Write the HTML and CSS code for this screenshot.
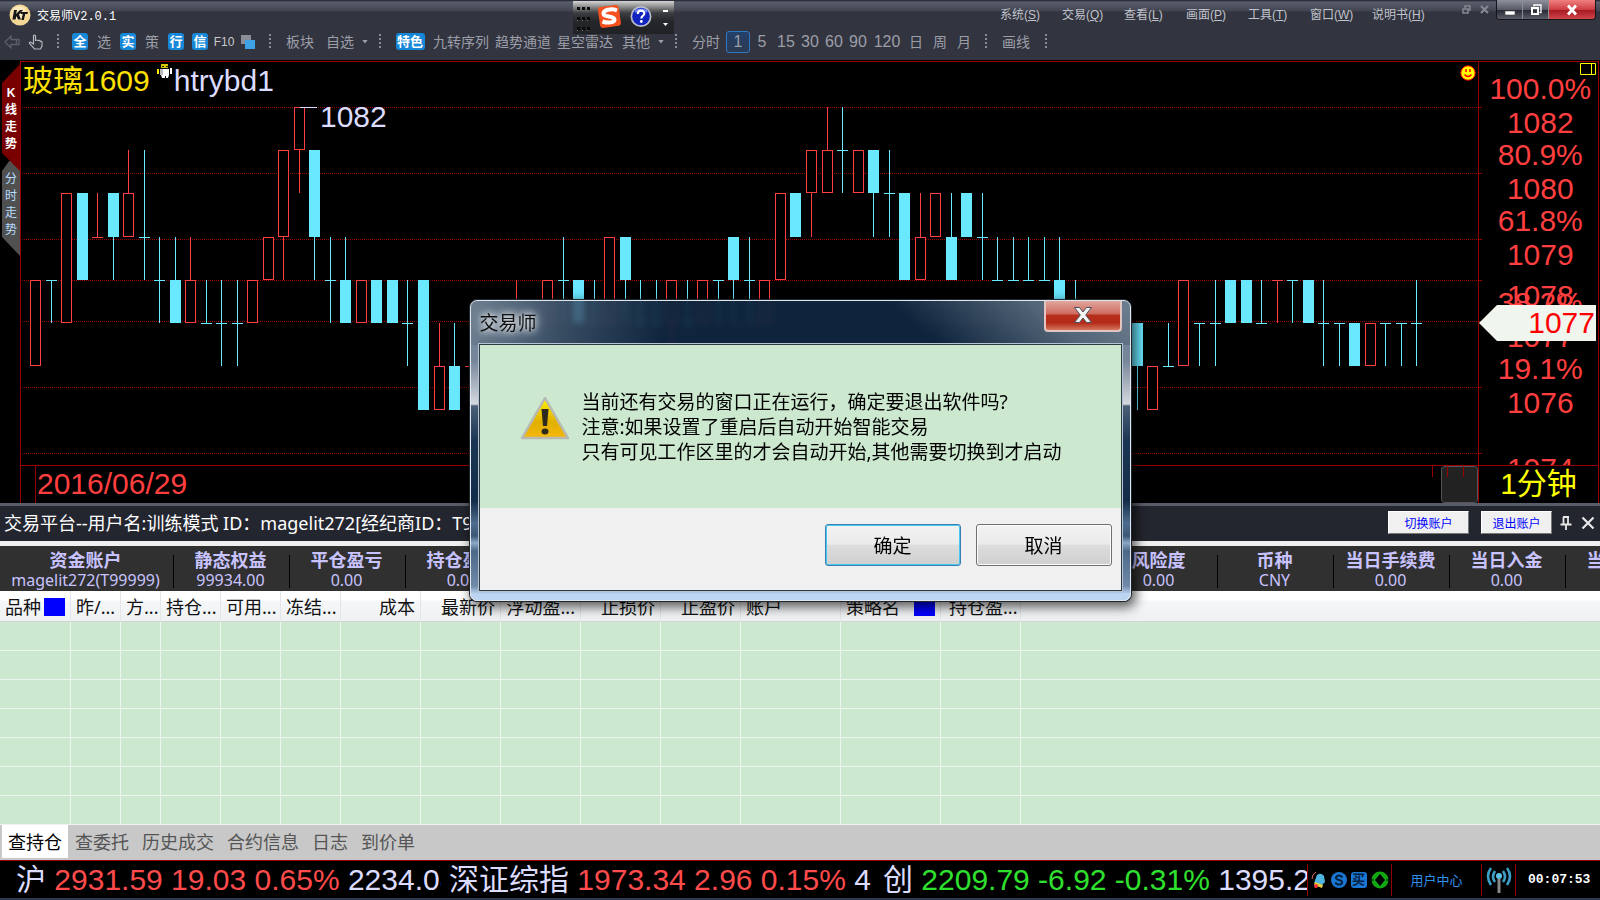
FILE: index.html
```html
<!DOCTYPE html>
<html lang="zh-CN">
<head>
  <meta charset="UTF-8">
  <meta name="viewport" content="width=device-width, initial-scale=1.0">
  <title>交易师V2.0.1</title>
  <link rel="stylesheet" href="styles.css">
</head>
<body>
  <!-- 标题栏 -->
  <header class="titlebar">
    <svg class="logo" width="22" height="22" viewBox="0 0 22 22">
      <circle cx="11" cy="11" r="10.5" fill="#f3d795"/>
      <circle cx="10" cy="9" r="7" fill="#fbe9bd"/>
      <path d="M5 6h3L7 10l4-4h3l-4 4.500 2 5H9l-1.500-3.500-1 3.500h-3zM12 8h7l-.5 2h-2.200l-1.500 6h-2.500l1.500-6h-2.300z" fill="#151515"/>
    </svg>
    <h1>交易师V2.0.1</h1>
    <nav class="menu">
      <a href="#">系统(<u>S</u>)</a>
      <a href="#">交易(<u>Q</u>)</a>
      <a href="#">查看(<u>L</u>)</a>
      <a href="#">画面(<u>P</u>)</a>
      <a href="#">工具(<u>T</u>)</a>
      <a href="#">窗口(<u>W</u>)</a>
      <a href="#">说明书(<u>H</u>)</a>
    </nav>
    <div class="mdi">
      <button aria-label="还原子窗口"><svg width="9" height="9" viewBox="0 0 9 9"><path d="M3 3V1h5v4H6M1 4h5v4H1z" fill="none" stroke="#858893" stroke-width="1.500"/></svg></button>
      <button aria-label="关闭子窗口"><svg width="9" height="9" viewBox="0 0 9 9"><path d="M1 1l7 7M8 1L1 8" stroke="#858893" stroke-width="2.200"/></svg></button>
    </div>
    <div class="win-buttons">
      <button aria-label="最小化"><svg width="12" height="12" viewBox="0 0 12 12"><rect x="1" y="7" width="10" height="4" fill="#fff" stroke="#444" stroke-width=".6"/></svg></button>
      <button aria-label="还原"><svg width="12" height="12" viewBox="0 0 12 12"><path d="M4 2.500V1h7v7.500H9.500" fill="none" stroke="#fff" stroke-width="1.300"/><path d="M2 4h6v6H2z" fill="none" stroke="#fff" stroke-width="2"/></svg></button>
      <button class="win-close" aria-label="关闭"><svg width="12" height="12" viewBox="0 0 12 12"><path d="M2 1.500l8 9M10 1.500l-8 9" stroke="#fff" stroke-width="2.800"/></svg></button>
    </div>
  </header>

  <!-- 输入法悬浮条 -->
  <div class="ime">
    <svg width="101" height="33" viewBox="0 0 101 33">
      <g stroke="#0a0a0a" stroke-width="3" stroke-dasharray="3 2"><path d="M4 7.500h15M4 17.500h15M4 27.500h15"/></g>
      <g stroke="#777" stroke-width="1" stroke-dasharray="1 4"><path d="M4 9.500h15M4 19.500h15M4 29.500h15"/></g>
      <rect x="26" y="5" width="21" height="21" rx="3" fill="#f4511e" transform="rotate(-8 36 16)"/>
      <path d="M44 9.500C38 7 30 9 30.500 13c.5 3.500 10.500 1.500 11 5.500.3 3-6.500 4-12 2" fill="none" stroke="#fff" stroke-width="4"/>
      <circle cx="68" cy="15.500" r="10.500" fill="#b9bccb"/>
      <circle cx="68" cy="15.500" r="8.800" fill="#1224c0"/>
      <path d="M62 11a7 5 0 0 1 12 0" fill="none" stroke="#6f86ff" stroke-width="2"/>
      <path d="M64.800 13c0-4.500 6.500-4.200 6.500-.5 0 2.300-3 2.300-3 5" fill="none" stroke="#fff" stroke-width="2.200"/>
      <circle cx="68.300" cy="20.500" r="1.400" fill="#fff"/>
      <path d="M90 9h5v2h-5zM90 22h5l-2.500 3z" fill="#fff"/>
    </svg>
  </div>

  <!-- 工具栏 -->
  <div class="toolbar">
    <button class="nav-btn" aria-label="后退"><svg width="16" height="16" viewBox="0 0 16 16"><path d="M1 8l6-6v3.500h8v5H7V14zM12.500 5.500v5" fill="none" stroke="#5c5f69" stroke-width="1.300"/></svg></button>
    <button class="nav-btn" aria-label="手形"><svg width="16" height="16" viewBox="0 0 16 16"><path d="M5.500 10V2q0-1 1-1t1 1v5q0-1 1.200-1t1.300 1q0-.8 1.200-.6t1.300 1q1.500-.4 1.500 1V12l-1.500 3H6.500L1.500 9.500q-.5-1.500 1-1.500z" fill="none" stroke="#b4b6bd" stroke-width="1.200"/></svg></button>
    <span class="sep"></span>
    <button class="cell"><b class="badge">全</b></button>
    <button class="cell">选</button>
    <button class="cell"><b class="badge">实</b></button>
    <button class="cell">策</button>
    <button class="cell"><b class="badge">行</b></button>
    <button class="cell"><b class="badge">信</b></button>
    <button class="cell f10">F10</button>
    <button class="cell" aria-label="窗口布局"><svg width="14" height="14" viewBox="0 0 14 14"><path d="M0 0h10v9H0z" fill="#8b8e96"/><path d="M4 5h10v9H4z" fill="#3ea2e5"/></svg></button>
    <span class="sep"></span>
    <button class="pair">板块</button>
    <button class="pair">自选</button>
    <span class="caret"></span>
    <span class="sep"></span>
    <button class="pair"><b class="badge wide">特色</b></button>
    <button class="quad">九转序列</button>
    <button class="quad">趋势通道</button>
    <button class="quad">星空雷达</button>
    <button class="pair">其他</button>
    <span class="caret"></span>
    <span class="sep"></span>
    <button class="pair">分时</button>
    <button class="cell num active">1</button>
    <button class="cell num">5</button>
    <button class="cell num">15</button>
    <button class="cell num">30</button>
    <button class="cell num">60</button>
    <button class="cell num">90</button>
    <button class="cell num long">120</button>
    <button class="cell">日</button>
    <button class="cell">周</button>
    <button class="cell">月</button>
    <span class="sep"></span>
    <button class="pair">画线</button>
    <span class="sep"></span>
  </div>

  <!-- K线图 -->
  <section class="chart">
    <div class="side-tabs">
      <button class="side-tab on">K线走势</button>
      <button class="side-tab">分时走势</button>
    </div>
    <div class="plot">
      <svg id="candles" width="100%" height="403"></svg>
      <div class="symbol">
        <span class="code">玻璃1609</span>
        <svg width="16" height="16" viewBox="0 0 16 16">
          <path d="M4 1h7v4H4z" fill="#d8c800"/><path d="M5 3h2v1H5zM9 3h2v1H9z" fill="#222"/>
          <path d="M4 6h8v6l-1 3H9v-2H8v2H5l-1-3z" fill="#fff"/><path d="M3 6h3v6H3z" fill="#bbb"/>
          <path d="M0 6h2v5H0z" fill="#ffe900"/><path d="M13 5h2v6h-2z" fill="#fff"/>
        </svg>
        <span class="strategy">htrybd1</span>
      </div>
      <svg class="smiley" width="16" height="16" viewBox="0 0 16 16">
        <circle cx="8" cy="8" r="7.200" fill="#ff0" stroke="#f00"/>
        <path d="M6 4v3M10 4v3M4.500 9.500q3.500 4 7 0" fill="none" stroke="#f00" stroke-width="1.500"/>
      </svg>
      <div class="time-axis">
        <span class="date">2016/06/29</span>
        <svg width="46" height="37" viewBox="0 0 46 37">
          <rect x="9.500" y=".5" width="36" height="36" rx="3" fill="#222" stroke="#555"/>
          <path d="M.5 0v11M15.500 0v11M31.500 0v11" stroke="#960000"/>
        </svg>
      </div>
    </div>
    <div class="price-axis">
      <svg id="prices" width="100%" height="404"></svg>
      <div class="period">1分钟</div>
    </div>
  </section>

  <!-- 账户面板 -->
  <section class="account">
    <div class="account-title">
      <h2>交易平台--用户名:训练模式 ID：magelit272[经纪商ID：T99999]</h2>
      <button class="acc-btn switch">切换账户</button>
      <button class="acc-btn">退出账户</button>
      <button class="acc-icon" aria-label="固定"><svg width="12" height="14" viewBox="0 0 12 14"><path d="M3 1h6M3.500 1v7M8 1v7M.5 8.500h11M6 9v5" stroke="#e8e8e8" stroke-width="1.800" fill="none"/></svg></button>
      <button class="acc-icon" aria-label="关闭面板"><svg width="14" height="14" viewBox="0 0 14 14"><path d="M1.500 1.500l11 11M12.500 1.500l-11 11" stroke="#e8e8e8" stroke-width="2.200"/></svg></button>
    </div>
    <dl class="stats">
      <div class="stat first"><dt>资金账户</dt><dd>magelit272(T99999)</dd></div>
      <div class="stat"><dt>静态权益</dt><dd>99934.00</dd></div>
      <div class="stat"><dt>平仓盈亏</dt><dd>0.00</dd></div>
      <div class="stat"><dt>持仓盈亏</dt><dd>0.00</dd></div>
      <div class="stat"></div>
      <div class="stat"></div>
      <div class="stat"></div>
      <div class="stat"></div>
      <div class="stat"></div>
      <div class="stat"><dt>风险度</dt><dd>0.00</dd></div>
      <div class="stat"><dt>币种</dt><dd>CNY</dd></div>
      <div class="stat"><dt>当日手续费</dt><dd>0.00</dd></div>
      <div class="stat"><dt>当日入金</dt><dd>0.00</dd></div>
      <div class="stat"><dt>当日出金</dt></div>
    </dl>
    <div class="grid">
      <table>
        <colgroup>
          <col class="w71"><col class="w50"><col class="w40"><col class="w60"><col class="w60"><col class="w60">
          <col class="w80"><col class="w80"><col class="w80"><col class="w80"><col class="w80">
          <col class="w100"><col class="w100"><col class="w80"><col>
        </colgroup>
        <thead>
          <tr>
            <th><div class="marked">品种<i></i></div></th>
            <th>昨/...</th>
            <th>方...</th>
            <th>持仓...</th>
            <th>可用...</th>
            <th>冻结...</th>
            <th class="right">成本</th>
            <th class="right">最新价</th>
            <th class="right">浮动盈...</th>
            <th class="right">止损价</th>
            <th class="right">止盈价</th>
            <th>账户</th>
            <th><div class="marked">策略名<i></i></div></th>
            <th class="wide-pad">持仓盈...</th>
            <th></th>
          </tr>
        </thead>
        <tbody id="rows"></tbody>
      </table>
    </div>
    <div class="tabs">
      <button class="tab on">查持仓</button>
      <button class="tab">查委托</button>
      <button class="tab">历史成交</button>
      <button class="tab">合约信息</button>
      <button class="tab">日志</button>
      <button class="tab">到价单</button>
    </div>
  </section>

  <!-- 底部行情 -->
  <footer class="ticker">
    <div class="quotes">
      <div class="quote first">沪 <span class="up">2931.59 19.03 0.65%</span> 2234.08</div>
      <div class="quote">深证综指 <span class="up">1973.34 2.96 0.15%</span> 4</div>
      <div class="quote">创 <span class="down">2209.79 -6.92 -0.31%</span> 1395.27</div>
    </div>
    <div class="tray">
      <svg width="16" height="18" viewBox="0 0 16 18"><path d="M3 12L6 4q4-3 7 1l1 6-3 3z" fill="#4fb4e0"/><path d="M4 11l8 3-1 3-8-3z" fill="#e8d040"/><circle cx="5" cy="15" r="2" fill="#f33"/><path d="M1 8q0-5 4-7" fill="none" stroke="#d66"/></svg>
      <svg width="16" height="18" viewBox="0 0 16 18"><circle cx="8" cy="9" r="8" fill="#1976d2"/><path d="M11.500 6.500Q10 4.500 8 4.500T4.800 6.500Q5 8.500 8 9t3.200 2.500Q11 13.500 8 13.500t-3.500-2" fill="none" stroke="#06213f" stroke-width="2"/></svg>
      <span class="buy">买</span>
      <svg width="18" height="18" viewBox="0 0 18 18"><circle cx="9" cy="9" r="8.500" fill="#12a812"/><path d="M9 3l5 6-5 6-5-6z" fill="#000"/><path d="M0 9h3M15 9h3" stroke="#000"/></svg>
    </div>
    <a class="user-center" href="#">用户中心</a>
    <div class="signal">
      <svg width="26" height="28" viewBox="0 0 26 28"><g fill="none" stroke="#3f9cc4" stroke-width="2.600"><path d="M5 2q-6 8 0 17M21 2q6 8 0 17M9 5q-4 6 0 11M17 5q4 6 0 11"/></g><circle cx="13" cy="10" r="3" fill="#5cc0e8"/><path d="M11.500 13h3v14h-3z" fill="#888"/></svg>
    </div>
    <time class="clock">00:07:53</time>
  </footer>

  <!-- 退出确认 -->
  <div class="overlay">
    <div class="dialog" role="alertdialog" aria-labelledby="dlg-title" aria-describedby="dlg-text">
      <div class="dialog-head">
        <h3 id="dlg-title">交易师</h3>
        <button class="dialog-close" aria-label="关闭"><svg width="20" height="18" viewBox="0 0 20 18"><path d="M1.500 1.500h5L10 6l3.500-4.500h5L12.700 9l5.800 7.500h-5L10 12l-3.500 4.500h-5L7.300 9z" fill="#f4f4f4" stroke="#4a5060"/></svg></button>
      </div>
      <div class="dialog-body">
        <div class="dialog-main">
          <svg width="50" height="44" viewBox="0 0 50 44">
            <defs><linearGradient id="warn" x1="0" y1="0" x2="0" y2="1"><stop offset="0" stop-color="#fff200"/><stop offset=".6" stop-color="#e0b000"/><stop offset="1" stop-color="#f5b80c"/></linearGradient></defs>
            <path d="M25 2L48 42H2z" fill="url(#warn)" stroke="#b9b9b4" stroke-width="2.500" stroke-linejoin="round"/>
            <path d="M21.500 13h7l-1.500 17h-4z" fill="#2e2a1e"/><ellipse cx="25" cy="35.500" rx="3.500" ry="3" fill="#2e2a1e"/>
          </svg>
          <p id="dlg-text">当前还有交易的窗口正在运行，确定要退出软件吗?<br>注意:如果设置了重启后自动开始智能交易<br>只有可见工作区里的才会自动开始,其他需要切换到才启动</p>
        </div>
        <div class="dialog-foot">
          <button class="dlg-btn default">确定</button>
          <button class="dlg-btn">取消</button>
        </div>
      </div>
    </div>
  </div>

  <script src="script.js"></script>
</body>
</html>
```
FILE: styles.css
```css
* {
  box-sizing: border-box;
}

html,
body {
  height: 100%;
}

body {
  margin: 0;
  display: flex;
  flex-direction: column;
  background: #000;
  font-family: "Noto Sans", "Noto Sans CJK SC", sans-serif;
  overflow: hidden;
}

button {
  border: none;
  padding: 0;
  background: none;
  font: inherit;
  color: inherit;
  display: flex;
  align-items: center;
  justify-content: center;
  white-space: nowrap;
}

h1, h2, h3, p, dl, dt, dd {
  margin: 0;
  font-weight: normal;
}

/* 标题栏 */
.titlebar {
  display: flex;
  flex: none;
  height: 30px;
  padding-left: 9px;
  align-items: center;
  background: linear-gradient(#1c2028 0, #5a5e6c 2px, #444753 10px, #3f424d 11px, #32343f 12px);
  font-family: "Liberation Sans", "Noto Sans CJK SC", sans-serif;
  font-size: 12px;
  color: #fff;
}

.titlebar h1 {
  flex: 1;
  padding-left: 6px;
  font-family: "Liberation Mono", "Noto Sans CJK SC", monospace;
  font-size: 12px;
}

.menu {
  display: flex;
  padding-bottom: 3px;
}

.menu a {
  width: 62px;
  color: #c0c3cb;
  text-decoration: none;
  white-space: nowrap;
}

.mdi {
  display: flex;
  align-self: flex-start;
  gap: 9px;
  width: 62px;
  padding-left: 28px;
  height: 19px;
}

.win-buttons {
  display: flex;
  align-self: flex-start;
  height: 20px;
  margin-right: 4px;
  border: 1px solid #14161b;
  border-top: none;
  border-radius: 0 0 4px 4px;
  overflow: hidden;
}

.win-buttons button {
  width: 26px;
  border-right: 1px solid #8b8e98;
  background: linear-gradient(#8f929c, #585b66 50%, #262933 52%, #5b5e69);
}

.win-buttons .win-close {
  width: 46px;
  border-right: none;
  background: linear-gradient(#f08080, #cf3d42 50%, #a41820 52%, #d0464a);
}

/* 输入法 */
.ime {
  position: absolute;
  top: 1px;
  left: 573px;
  height: 33px;
  background: linear-gradient(#d4d4d4, #8a8a8a 6px, #3c3d40 12px, #24262a 20px, #202226);
  z-index: 2;
}

.ime svg {
  display: block;
}

/* 工具栏 */
.toolbar {
  display: flex;
  flex: none;
  height: 31px;
  padding-bottom: 7px;
  align-items: center;
  background: #32343f;
  border-bottom: 1px solid #000;
  font-size: 14px;
  line-height: 20px;
  color: #9c9fa8;
}

.nav-btn {
  width: 24px;
}

.cell {
  width: 24px;
  height: 22px;
}

.cell.long {
  width: 34px;
}

.num {
  font-family: "Liberation Sans", sans-serif;
  font-size: 16px;
}

.cell.active {
  border: 1px solid #2f77c4;
  border-radius: 3px;
  background: linear-gradient(#24406a, #2c3a52);
}

.f10 {
  font-family: "Liberation Sans", sans-serif;
  font-size: 12px;
  color: #c9c9c9;
}

.pair {
  width: 40px;
}

.quad {
  width: 62px;
}

.badge {
  width: 16px;
  height: 17px;
  border-radius: 3px;
  background: #1787d8;
  color: #fff;
  font-size: 13px;
  line-height: 16px;
  text-align: center;
}

.badge.wide {
  width: 29px;
}

.sep {
  width: 20px;
  height: 15px;
  background: repeating-linear-gradient(#8a8d96 0 2px, transparent 2px 4px) center / 2px 100% no-repeat;
}

.caret {
  width: 10px;
  height: 4px;
  background: #9c9fa8;
  clip-path: polygon(20% 0, 80% 0, 50% 100%);
}

/* K线图 */
.chart {
  display: flex;
  flex: none;
  height: 442px;
  padding-right: 1px;
  font-family: "Liberation Sans", "Noto Sans CJK SC", sans-serif;
  font-size: 30px;
  line-height: 36px;
}

.side-tabs {
  width: 20px;
  padding: 3px 0 0 2px;
}

.side-tab {
  display: block;
  width: 18px;
  padding: 10px 3px 17px;
  background: #505050;
  color: #b8dcff;
  font-size: 12px;
  line-height: 17px;
  white-space: normal;
  word-break: break-all;
  clip-path: polygon(40% 0, 0 10px, 0 calc(100% - 19px), 100% 100%, 100% 0);
}

.side-tab.on {
  position: relative;
  z-index: 1;
  margin-bottom: -10px;
  padding: 21px 3px 18px;
  background: #780000;
  color: #fff;
  font-weight: bold;
  clip-path: polygon(100% 0, 0 19px, 0 calc(100% - 18px), 100% 100%);
}

.plot {
  position: relative;
  flex: 1;
  display: flex;
  flex-direction: column;
  border-top: 1px solid #960000;
  border-left: 1px solid #960000;
}

.plot > svg,
.price-axis > svg {
  display: block;
  flex: none;
}

#candles text {
  fill: #dcdcff;
}

.symbol {
  position: absolute;
  top: 1px;
  left: 2px;
  display: flex;
}

.code {
  color: #ffe100;
}

.symbol svg {
  margin: 0 1px 0 7px;
}

.strategy {
  color: #dcdcff;
}

.smiley {
  position: absolute;
  top: 3px;
  right: 2px;
}

.time-axis {
  display: flex;
  flex: 1;
  justify-content: space-between;
  border-top: 1px solid #960000;
  padding-left: 14px;
}

.date {
  border-left: 1px solid #960000;
  padding-left: 1px;
  color: #ff3f3f;
}

.price-axis {
  display: flex;
  flex-direction: column;
  width: 121px;
  border: solid #960000;
  border-width: 1px 1px 0;
}

#prices {
  fill: #ff3f3f;
}

.period {
  height: 38px;
  margin-top: -1px;
  border-top: 1px solid #960000;
  text-align: center;
  color: #ff0;
}

/* 账户面板 */
.account {
  display: flex;
  flex: 1;
  flex-direction: column;
  min-height: 0;
  border-top: 3px solid #595d69;
}

.account-title {
  display: flex;
  flex: none;
  height: 35px;
  padding: 0 5px 2px 4px;
  align-items: center;
  background: #24262f;
  color: #fff;
}

.account-title h2 {
  flex: 1;
  font-family: "Noto Sans", "Noto Sans CJK TC", "Noto Sans CJK SC", sans-serif;
  font-size: 18px;
  line-height: 24px;
}

.acc-btn {
  width: 71px;
  height: 23px;
  margin-right: 8px;
  border: 1px solid;
  border-color: #fff #777 #777 #fff;
  background: #f0f0f0;
  color: #00f;
  font-size: 12px;
}

.acc-btn.switch {
  width: 81px;
  margin-right: 12px;
}

.acc-icon + .acc-icon {
  margin-left: 9px;
}

.stats {
  display: flex;
  flex: none;
  height: 50px;
  overflow: hidden;
  border-top: 5px solid #f0f0f0;
  background: #303030;
  color: #c8c3ff;
  text-align: center;
}

.stat {
  flex: none;
  width: 116px;
  padding: 4px 3px 0 0;
  background: linear-gradient(#000, #000) right 9px / 1px 33px no-repeat;
}

.stat.first {
  width: 174px;
}

.stat dt {
  font-size: 18px;
  font-weight: bold;
  line-height: 20px;
}

.stat dd {
  font-size: 16px;
  line-height: 20px;
}

/* 持仓表 */
.grid {
  flex: 1;
  min-height: 0;
  overflow: hidden;
  background: #cce8cf;
}

table {
  width: 100%;
  table-layout: fixed;
  border-spacing: 0;
}

.w40 { width: 40px; }
.w50 { width: 50px; }
.w60 { width: 60px; }
.w71 { width: 71px; }
.w80 { width: 80px; }
.w100 { width: 100px; }

th {
  height: 31px;
  padding: 2px 5px 0 5px;
  border-right: 1px solid #e2e5e9;
  border-bottom: 1px solid #d5d5d5;
  background: linear-gradient(#fff 9px, #f6f7f9 10px, #eef0f2);
  color: #111;
  font-size: 18px;
  font-weight: normal;
  line-height: 24px;
  text-align: left;
  white-space: nowrap;
}

th.right {
  text-align: right;
}

th.wide-pad {
  padding-left: 8px;
}

.marked {
  display: flex;
  align-items: center;
  justify-content: space-between;
}

.marked i {
  width: 21px;
  height: 18px;
  background: #00f;
}

td {
  height: 29px;
  padding: 0;
  border-right: 1px solid #edf5ee;
  border-bottom: 1px solid #edf5ee;
}

th:last-child,
td:last-child {
  border-right: none;
}

.tabs {
  display: flex;
  flex: none;
  gap: 1px;
  height: 35px;
  padding: 0 0 2px 2px;
  background: #c8c8c8;
}

.tab {
  padding: 0 6px 1px;
  color: #555;
  font-size: 18px;
}

.tab.on {
  background: #fff;
  color: #000;
}

/* 底部行情 */
.ticker {
  display: flex;
  flex: none;
  height: 40px;
  border-top: 1px solid #960000;
  border-bottom: 2px solid #2c3b50;
  font-family: "Liberation Sans", "Noto Sans CJK SC", sans-serif;
  align-items: center;
}

.quotes {
  display: grid;
  flex: 1;
  grid-template-columns: 441fr 434fr 432fr;
}

.quote {
  min-width: 0;
  padding-left: 8px;
  overflow: hidden;
  color: #dcdcff;
  font-size: 30px;
  line-height: 37px;
  white-space: nowrap;
}

.quote.first {
  padding-left: 16px;
}

.up {
  color: #ff4b4b;
}

.down {
  color: #2fe02f;
}

.tray,
.user-center,
.signal {
  display: flex;
  align-items: center;
  justify-content: center;
  height: 32px;
  border-left: 1px solid #960000;
}

.tray {
  gap: 4px;
  width: 84px;
}

.buy {
  width: 16px;
  height: 16px;
  border-radius: 3px;
  background: #1976d2;
  color: #06213f;
  font-size: 13px;
  font-weight: bold;
  line-height: 16px;
  text-align: center;
}

.user-center {
  width: 90px;
  color: #2f8fea;
  font-size: 13px;
  text-decoration: none;
}

.signal {
  width: 35px;
  border-right: 1px solid #960000;
}

.clock {
  width: 84px;
  padding-left: 12px;
  color: #fff;
  font-family: "Liberation Mono", monospace;
  font-size: 13px;
  font-weight: bold;
}

/* 对话框 */
.overlay {
  position: fixed;
  inset: 0;
  display: flex;
  align-items: center;
  justify-content: center;
  z-index: 10;
}

.dialog {
  width: 661px;
  padding: 0 8px 9px;
  border: 1px solid #dfe6ee;
  border-radius: 7px;
  background:
    linear-gradient(100deg, rgba(150, 165, 180, .7) 0, rgba(120, 138, 156, .4) 14%, transparent 30%) top / 100% 44px no-repeat,
    linear-gradient(-140deg, rgba(150, 165, 180, .7) 0, rgba(130, 145, 160, .6) 14%, transparent 34%) top / 100% 44px no-repeat,
    linear-gradient(rgba(18, 46, 76, .8), rgba(18, 46, 76, .8)) top / 100% 44px no-repeat,
    linear-gradient(transparent 44px, #73859a 44px, #77869a 60px, #d5d9df 103px, #4b6078 105px, #1b3654 140px, #132c49 200px, #4d6c8e 222px, #3c5878 235px, #8ba8c8 242px, #4c6888 250px, #7089a8 285px, #bcd5f2 293px);
  box-shadow: 0 0 0 1px #20262e, 3px 4px 12px 2px rgba(0, 0, 0, .65);
  backdrop-filter: blur(3px);
}

.dialog-head {
  display: flex;
  height: 43px;
  justify-content: space-between;
  align-items: flex-start;
}

.dialog-head h3 {
  padding: 8px 0 0 1px;
  color: #111;
  font-size: 19px;
  line-height: 28px;
  text-shadow: 0 0 6px #fff, 0 0 10px #ccd4dc, 0 0 14px #ccd4dc;
}

.dialog-close {
  width: 78px;
  height: 31px;
  border: 2px solid #e3c4c0;
  border-top: none;
  border-radius: 0 0 4px 4px;
  background: linear-gradient(#e0a79d, #cf6a5e 45%, #b82f1b 48%, #b32a18 75%, #d4775c);
}

.dialog-body {
  border: 1px solid #2c3a44;
  box-shadow: 0 0 0 1px #b5c3d2;
}

.dialog-main {
  display: flex;
  gap: 12px;
  padding: 45px 10px 43px 40px;
  background: #cce8cf;
  color: #000;
  font-size: 19px;
  line-height: 25px;
}

.dialog-main svg {
  flex: none;
  margin-top: 6px;
}

.dialog-foot {
  display: flex;
  justify-content: flex-end;
  gap: 15px;
  padding: 16px 9px 24px;
  background: #f0f0f0;
}

.dlg-btn {
  width: 136px;
  height: 42px;
  border: 1px solid #707070;
  border-radius: 3px;
  background: linear-gradient(#f2f2f2, #ebebeb 48%, #dddddd 50%, #cfcfcf);
  box-shadow: inset 0 0 0 1px #fbfbfb;
  color: #000;
  font-size: 19px;
}

.dlg-btn.default {
  border-color: #3c7fb1;
  box-shadow: inset 0 0 0 1px #46c8f0;
}
```
FILE: script.js
```js
const NS = "http://www.w3.org/2000/svg";
const RED = "#ff3f3f";
const CYAN = "#6ae8ff";

// y of each price tick, 1082 down to 1075
const levels = [45, 88, 131, 175, 218, 261, 304, 348];
const gridLines = [45, 111, 177, 218, 259, 325, 391];

// colour, high, body top, body bottom, low (index into levels), null = no bar
const bars = [
  "r4466", "c4445", "r2255", "c2244", "r2333", "c2234", "r1233", "c1334", "c3445", "c3455",
  "r3455", "c4555", "c4556", "c4556", "r4455", "r3344", "r1134", "r0012", "c1134", "c3445",
  "c3455", "r4455", "c4455", "c4455", "c4556", "c4477", "r5677", "c5677", "r6666", null,
  null, "r4555", null, "r4455", "c3445", "c4455", "c4555", "r3355", "c3345", "c4555",
  "c4555", "r4456", "c4555", "r4455", "c4445", "c3345", "c3445", "r4455", "r2244", "c2233",
  "r1123", "r0122", "c0112", "r1122", "c1123", "c1223", "c2244", "r2344", "r2233", "c2344",
  "c2233", "c2334", "c3444", "c3444", "c3444", "c3444", "c3455", "c4555", null, null,
  null, "c5567", "r6677", "c5666", "r4466", "c5556", "c4556", "c4455", "c4455", "c4555",
  "r4445", "c4445", "c4455", "c4556", "c5556", "c5566", "r5566", "c5556", "c5556", "c4556"
];

function add(parent, tag, attrs, text) {
  const el = document.createElementNS(NS, tag);
  for (const key in attrs) el.setAttribute(key, attrs[key]);
  if (text) el.textContent = text;
  parent.appendChild(el);
}

const candles = document.getElementById("candles");
gridLines.forEach(y => {
  add(candles, "line", { x1: 1, x2: "100%", y1: y + 0.5, y2: y + 0.5, stroke: "#960000", "stroke-dasharray": "1 1" });
});

bars.forEach((bar, i) => {
  if (!bar) return;
  const color = bar[0] === "r" ? RED : CYAN;
  const [high, top, bottom, low] = [...bar.slice(1)].map(n => levels[n]);
  const x = Math.round(35 + 15.52 * i) - 21;
  if (top > high) add(candles, "rect", { x: x, y: high, width: 1, height: top - high, fill: color });
  if (low > bottom) add(candles, "rect", { x: x, y: bottom, width: 1, height: low - bottom, fill: color });
  if (top === bottom) {
    add(candles, "rect", { x: x - 5, y: top, width: 11, height: 1, fill: color });
  } else if (color === RED) {
    add(candles, "rect", { x: x - 4.5, y: top + 0.5, width: 10, height: bottom - top - 1, fill: "#000", stroke: RED });
  } else {
    add(candles, "rect", { x: x - 5, y: top, width: 11, height: bottom - top, fill: CYAN });
  }
});

// highest price mark
add(candles, "rect", { x: 279, y: 45, width: 17, height: 1, fill: "#dcdcff" });
add(candles, "text", { x: 299, y: 65 }, "1082");

// price scale
const prices = document.getElementById("prices");
const labels = [
  ["1082", 45], ["1080", 111], ["1079", 177], ["1078", 218], ["1077", 259], ["1076", 325], ["1074", 391]
];
const ratios = [["100.0%", 45], ["80.9%", 111], ["61.8%", 177], ["38.2%", 259], ["19.1%", 325]];
labels.forEach(([t, y]) => {
  add(prices, "rect", { x: 0, y: y, width: 3, height: 1, fill: "#960000" });
  add(prices, "text", { x: "51.5%", y: y + 26, "text-anchor": "middle" }, t);
});
ratios.forEach(([t, y]) => {
  add(prices, "text", { x: "51.5%", y: y - 8, "text-anchor": "middle" }, t);
});
add(prices, "path", { d: "M0 261L18 243H117V279H18Z", fill: "#f0f6ee" });
add(prices, "text", { x: 116, y: 271, "text-anchor": "end", fill: "#f00" }, "1077");
add(prices, "path", { d: "M101.5 1.500h15v11h-15zM112.500 1.500v11", fill: "none", stroke: "#ff0" });

// empty rows of the position table
const rows = document.getElementById("rows");
for (let r = 0; r < 7; r++) {
  const tr = rows.insertRow();
  for (let c = 0; c < 15; c++) tr.insertCell();
}
```
